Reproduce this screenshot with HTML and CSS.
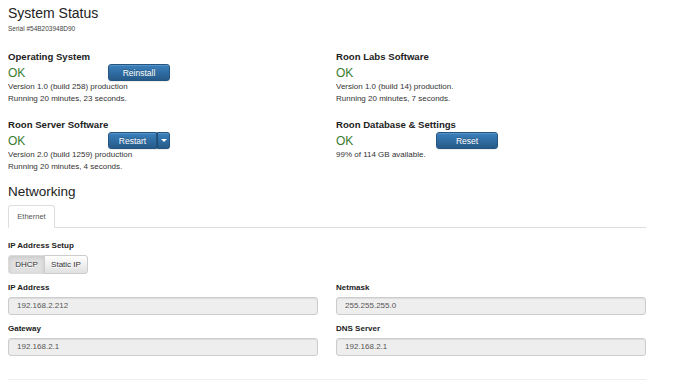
FILE: index.html
```html
<!DOCTYPE html>
<html>
<head>
<meta charset="utf-8">
<link rel="stylesheet" href="styles.css">
</head>
<body>
<div class="page">
  <h1 class="title">System Status</h1>
  <div class="serial">Serial #54B203948D90</div>

  <div class="status-grid">
    <div class="item">
      <div class="item-head">Operating System</div>
      <div class="ok-row"><span class="ok">OK</span><button class="btn btn-primary">Reinstall</button></div>
      <div class="info">Version 1.0 (build 258) production</div>
      <div class="info">Running 20 minutes, 23 seconds.</div>
    </div>
    <div class="item">
      <div class="item-head">Roon Labs Software</div>
      <div class="ok-row"><span class="ok">OK</span></div>
      <div class="info">Version 1.0 (build 14) production.</div>
      <div class="info">Running 20 minutes, 7 seconds.</div>
    </div>
    <div class="item">
      <div class="item-head">Roon Server Software</div>
      <div class="ok-row"><span class="ok">OK</span>
        <span class="split">
          <button class="btn btn-primary split-main">Restart</button><button class="btn btn-primary split-caret"><span class="caret"></span></button>
        </span>
      </div>
      <div class="info">Version 2.0 (build 1259) production</div>
      <div class="info">Running 20 minutes, 4 seconds.</div>
    </div>
    <div class="item">
      <div class="item-head">Roon Database &amp; Settings</div>
      <div class="ok-row"><span class="ok">OK</span><button class="btn btn-primary">Reset</button></div>
      <div class="info">99% of 114 GB available.</div>
    </div>
  </div>

  <h2 class="section">Networking</h2>
  <div class="tabs"><div class="tab">Ethernet</div></div>

  <div class="label setup-label">IP Address Setup</div>
  <div class="btn-group">
    <button class="btn btn-default active">DHCP</button><button class="btn btn-default">Static IP</button>
  </div>

  <div class="form-grid">
    <div class="field">
      <div class="label">IP Address</div>
      <div class="input">192.168.2.212</div>
    </div>
    <div class="field">
      <div class="label">Netmask</div>
      <div class="input">255.255.255.0</div>
    </div>
    <div class="field">
      <div class="label">Gateway</div>
      <div class="input">192.168.2.1</div>
    </div>
    <div class="field">
      <div class="label">DNS Server</div>
      <div class="input">192.168.2.1</div>
    </div>
  </div>
  <div class="rule"></div>
</div>
</body>
</html>
```

FILE: styles.css
```css
* { box-sizing: border-box; }
html, body { margin: 0; padding: 0; background: #fff; }
body {
  font-family: "Liberation Sans", Arial, sans-serif;
  color: #333;
}
.page {
  width: 638px;
  margin-left: 8px;
}
.title {
  font-size: 14px;
  font-weight: normal;
  line-height: 20px;
  margin: 3px 0 0 0;
  color: #222;
}
.serial {
  font-size: 6.5px;
  line-height: 10px;
  margin: 1px 0 0 0;
  color: #444;
}
.status-grid {
  display: grid;
  grid-template-columns: 310px 310px;
  column-gap: 18px;
  row-gap: 14px;
  margin-top: 17px;
}
.item-head {
  font-size: 9.6px;
  font-weight: bold;
  line-height: 12px;
  color: #222;
}
.ok-row {
  display: flex;
  align-items: center;
  height: 17px;
  margin-top: 1px;
}
.ok {
  width: 100px;
  font-size: 12px;
  line-height: 14px;
  color: #3a7d2f;
}
.info {
  font-size: 8px;
  line-height: 12px;
  color: #333;
}
.btn {
  font-family: "Liberation Sans", Arial, sans-serif;
  font-size: 8.5px;
  height: 17px;
  padding: 0 6px;
  border-radius: 3px;
  border: 1px solid;
  cursor: pointer;
  white-space: nowrap;
}
.btn-primary {
  width: 62px;
  color: #fff;
  background-image: linear-gradient(to bottom, #3a80bd 0%, #265a88 100%);
  border-color: #245580;
  text-shadow: 0 -1px 0 rgba(0,0,0,.2);
  box-shadow: inset 0 1px 0 rgba(255,255,255,.15), 0 1px 1px rgba(0,0,0,.075);
}
.split { display: inline-flex; }
.split-main {
  width: 49px;
  border-radius: 3px 0 0 3px;
}
.split-caret {
  width: 13px;
  padding: 0;
  border-left-color: #1f4a70;
  border-radius: 0 3px 3px 0;
  display: flex;
  align-items: center;
  justify-content: center;
}
.caret {
  display: block;
  width: 0;
  height: 0;
  border-top: 3px solid #fff;
  border-left: 3px solid transparent;
  border-right: 3px solid transparent;
}
.section {
  font-size: 13.5px;
  font-weight: normal;
  line-height: 17px;
  margin: 10px 0 0 0;
  color: #222;
}
.tabs {
  margin-top: 5px;
  display: flex;
  border-bottom: 1px solid #ddd;
}
.tab {
  width: 47px;
  height: 23px;
  margin-bottom: -1px;
  border: 1px solid #ddd;
  border-bottom-color: #fff;
  border-radius: 3px 3px 0 0;
  background: #fff;
  font-size: 7.5px;
  line-height: 21px;
  text-align: center;
  color: #555;
}
.label {
  font-size: 8px;
  font-weight: bold;
  line-height: 10px;
  color: #222;
}
.setup-label {
  margin-top: 13px;
}
.btn-group {
  display: flex;
  margin-top: 4px;
}
.btn-default {
  height: 19px;
  font-size: 8px;
  color: #333;
  border-color: #ccc;
  background-image: linear-gradient(to bottom, #fff 0%, #e0e0e0 100%);
  text-shadow: 0 1px 0 #fff;
  padding: 0;
}
.btn-default:first-child {
  width: 37px;
  border-radius: 3px 0 0 3px;
}
.btn-default:last-child {
  width: 44px;
  border-radius: 0 3px 3px 0;
  margin-left: -1px;
}
.btn-default.active {
  background-image: none;
  background-color: #e0e0e0;
  border-color: #dbdbdb;
  box-shadow: inset 0 2px 4px rgba(0,0,0,.1);
}
.form-grid {
  display: grid;
  grid-template-columns: 310px 310px;
  column-gap: 18px;
  row-gap: 9px;
  margin-top: 9px;
}
.field .label {
  margin-bottom: 4px;
}
.input {
  height: 18px;
  border: 1px solid #ccc;
  border-radius: 3px;
  background: #eee;
  font-size: 8px;
  line-height: 16px;
  padding-left: 8px;
  color: #555;
  box-shadow: inset 0 1px 1px rgba(0,0,0,.075);
}
.rule {
  margin-top: 23px;
  border-top: 1px solid #eee;
}
```
